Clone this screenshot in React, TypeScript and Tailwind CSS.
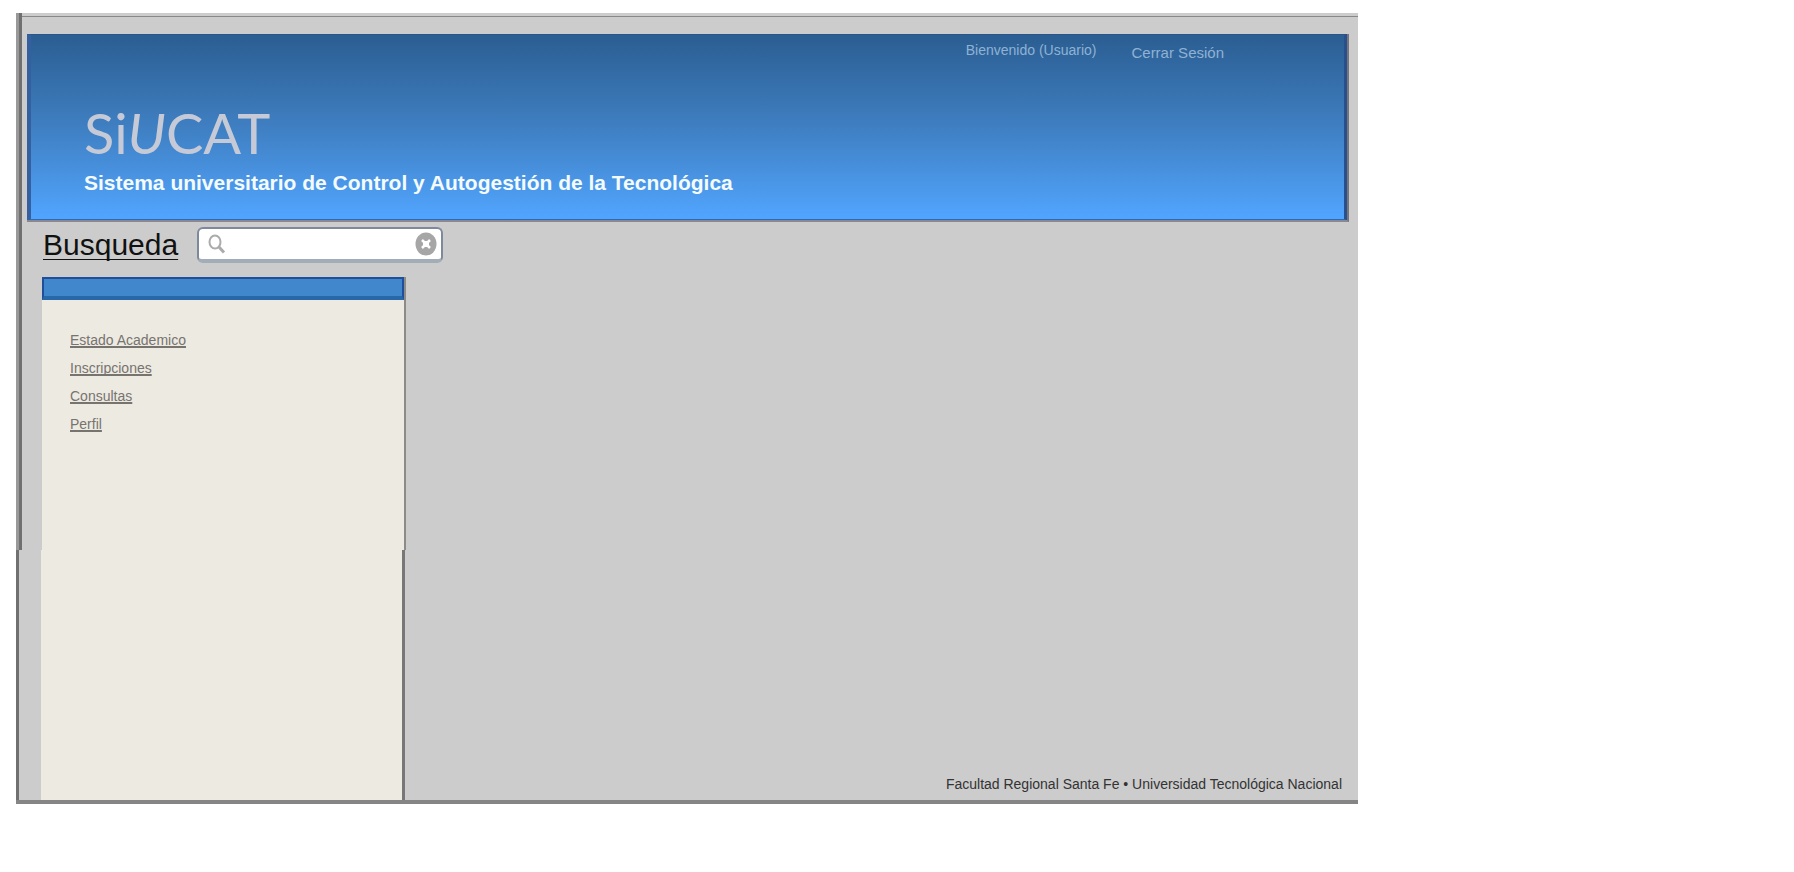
const links = ["Estado Academico", "Inscripciones", "Consultas", "Perfil"];

function SearchIcon() {
  return (
    <svg className="size-5 shrink-0" viewBox="0 0 20 20" fill="none" stroke="#ababab" aria-hidden="true">
      <ellipse cx="8" cy="8" rx="5.5" ry="6.5" strokeWidth="2" />
      <path d="M12 13 L17 18.500" strokeWidth="3" />
    </svg>
  );
}

function ClearIcon() {
  return (
    <svg className="h-6 w-[22px]" viewBox="0 0 22 24" aria-hidden="true">
      <ellipse cx="11" cy="12" rx="10.5" ry="11.5" fill="#a6a6a6" />
      <path d="M7 8 L15 16 M15 8 L7 16" stroke="#fff" strokeWidth="2.500" />
      <rect x="8" y="9" width="6" height="6" fill="#fff" />
    </svg>
  );
}

function Header() {
  return (
    <header className="ml-[5px] mr-[9px] border-b-2 border-r-2 border-b-[#888890] border-r-[#77757c]">
      <div className="h-[186px] border-b border-l-4 border-r-[3px] border-t border-b-[#2f68b5] border-l-[#34609f] border-r-[#28508c] border-t-[#2b5587] bg-linear-to-b from-[#2b5e92] via-[#3f7fc2] to-[#51a5ff]">
        <div className="flex h-[68px] items-start justify-end gap-[35px] pr-[120px] text-[#8fb2d4]">
          <span className="pt-[5px] text-sm leading-5">Bienvenido (Usuario)</span>
          <a href="#salir" className="pt-2 text-[15px] leading-5">
            Cerrar Sesión
          </a>
        </div>
        <div className="pl-[53px]">
          <h1 className="font-['Lato','Liberation_Sans',sans-serif] text-[56px] leading-[60px] text-[#c6cad6]">
            Si<i>U</i>CAT
          </h1>
          <p className="mt-2 text-[21px] font-bold leading-6 text-[#f4fbff]">
            Sistema universitario de Control y Autogestión de la Tecnológica
          </p>
        </div>
      </div>
    </header>
  );
}

function Search() {
  return (
    <form role="search" className="flex items-start pl-[21px] pt-[5px]" onSubmit={(e) => e.preventDefault()}>
      <label
        htmlFor="busqueda"
        className="w-[154px] text-[30px] leading-[35px] text-[#111] underline decoration-1 underline-offset-4 [text-decoration-skip-ink:none]"
      >
        Busqueda
      </label>
      <div className="flex h-9 w-[246px] items-center rounded-md border-2 border-b-4 border-[#7e8a9b] border-b-[#a3adb8] bg-white pl-2 pr-1">
        <SearchIcon />
        <input id="busqueda" type="text" className="min-w-0 flex-1 bg-transparent px-2 text-base outline-none" />
        <button type="reset" aria-label="Borrar">
          <ClearIcon />
        </button>
      </div>
    </form>
  );
}

export default function App() {
  return (
    <div className="min-h-screen bg-white pb-[67px] pl-4 pr-[436px] pt-[13px] font-['Liberation_Sans',Arial,sans-serif]">
      <div className="border-b-4 border-[#858585] bg-[#ccc]">
        <div className="border-l-[3px] border-[#999]">
          <div className="border-l-[3px] border-[#707070]">
            <div className="h-[3px]" />
            <div className="mb-[17px] h-px bg-[#888]" />
            <Header />
            <Search />
            <nav className="ml-5 mt-[14px] h-[273px] w-[364px] border-r-2 border-[#8b8b88] bg-[#edeae2]">
              <div className="h-[23px] border-2 border-b-4 border-[#1f4f9a] border-b-[#2769a8] bg-[#4187cb]" />
              <ul className="pl-7 pt-[30px]">
                {links.map((text) => (
                  <li key={text} className="h-7 text-sm leading-5">
                    <a
                      href="#menu"
                      className="text-[#77736f] underline decoration-2 underline-offset-1 [text-decoration-skip-ink:none]"
                    >
                      {text}
                    </a>
                  </li>
                ))}
              </ul>
            </nav>
          </div>
        </div>
        <footer className="flex h-[250px] items-end justify-between border-l-[3px] border-[#707070] pl-[22px] pr-4">
          <div className="h-full w-[364px] border-r-[3px] border-[#777] bg-[#edeae2]" />
          <p className="pb-[6px] text-sm leading-5 text-[#333]">
            Facultad Regional Santa Fe • Universidad Tecnológica Nacional
          </p>
        </footer>
      </div>
    </div>
  );
}
